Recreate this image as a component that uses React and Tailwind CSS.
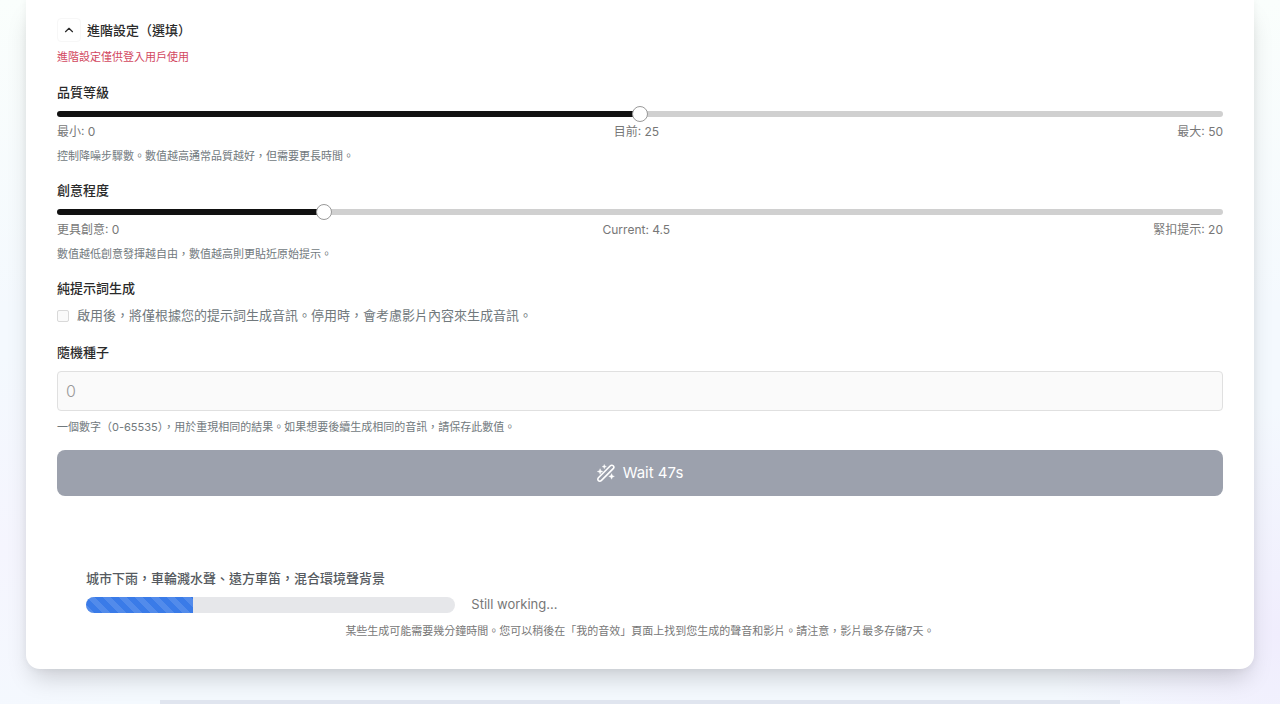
import React, { useState } from 'react';
import { ChevronUp } from 'lucide-react';

// Magic wand used on the generate button
const WandIcon = () => (
  <svg className="size-[18px]" viewBox="0 0 18 18" fill="none" stroke="currentColor" aria-hidden="true">
    <path
      d="M1.4 13.8 13.4 1.8a1.95 1.95 0 0 1 2.8 2.8L4.2 16.6a1.95 1.95 0 0 1-2.8-2.8Z"
      strokeWidth="1.6"
      strokeLinejoin="round"
    />
    <path
      d="m3.1 4.7.8 2 2 .8-2 .8-.8 2-.8-2-2-.8 2-.8ZM14.6 9.6l.8 2 2 .8-2 .8-.8 2-.8-2-2-.8 2-.8ZM7.3.5l.6 1.5 1.5.6-1.5.6-.6 1.5-.6-1.5-1.5-.6L6.700 2Z"
      fill="currentColor"
      strokeWidth="0.4"
      strokeLinejoin="round"
    />
  </svg>
);

// Labelled slider with min / current / max captions
const RangeField = ({ id, label, min, max, step, value, onChange, minText, currentText, maxText, hint }) => {
  const percent = ((value - min) / (max - min)) * 100;

  return (
    <div>
      <label htmlFor={id} className="block text-[13px] leading-[18px] font-medium text-[#2a2a2a]">
        {label}
      </label>
      <div className="mt-[3px] flex h-5 items-center">
        <input
          id={id}
          type="range"
          min={min}
          max={max}
          step={step}
          value={value}
          onChange={(e) => onChange(Number(e.target.value))}
          style={{ backgroundImage: `linear-gradient(to right, #111 ${percent}%, #d0d0d0 ${percent}%)` }}
          className="h-[6px] w-full appearance-none rounded-full [&::-webkit-slider-thumb]:size-4 [&::-webkit-slider-thumb]:appearance-none [&::-webkit-slider-thumb]:rounded-full [&::-webkit-slider-thumb]:border [&::-webkit-slider-thumb]:border-[#999] [&::-webkit-slider-thumb]:bg-white"
        />
      </div>
      <div className="flex justify-between text-xs leading-4 text-[#777]">
        <span>{minText}</span>
        <span>{currentText}</span>
        <span>{maxText}</span>
      </div>
      <p className="mt-2 text-[11px] leading-4 text-[#71797d]">{hint}</p>
    </div>
  );
};

const ProgressItem = ({ prompt, percent, status }) => (
  <div className="mt-[73px] px-[29px]">
    <p className="text-[13px] leading-[18px] font-medium text-[#555a60]">{prompt}</p>
    <div className="mt-2 flex h-5 items-center gap-4">
      <div
        role="progressbar"
        aria-label={prompt}
        aria-valuenow={percent}
        aria-valuemin={0}
        aria-valuemax={100}
        className="h-4 w-1/3 overflow-hidden rounded-full bg-[#e6e7ea]"
      >
        <div
          style={{ width: `${percent}%` }}
          className="h-full bg-[#3a7be8] bg-[linear-gradient(45deg,rgba(255,255,255,0.12)_25%,transparent_25%,transparent_50%,rgba(255,255,255,0.12)_50%,rgba(255,255,255,0.12)_75%,transparent_75%)] bg-size-[16px_16px]"
        />
      </div>
      <span className="text-[13px] text-[#777]">{status}</span>
    </div>
    <p className="mt-2 text-center text-[11px] leading-4 text-[#777]">
      某些生成可能需要幾分鐘時間。您可以稍後在「我的音效」頁面上找到您生成的聲音和影片。請注意，影片最多存儲7天。
    </p>
  </div>
);

const App = () => {
  const [open, setOpen] = useState(true);
  const [quality, setQuality] = useState(25);
  const [creativity, setCreativity] = useState(4.5);

  return (
    <div
      lang="zh-Hant"
      className="flex min-h-screen flex-col bg-[#f4f9fe] bg-[radial-gradient(circle_at_100%_90%,#f0edfd_0%,transparent_16%),radial-gradient(circle_at_0%_78%,#f5f5fe_0%,transparent_14%),linear-gradient(to_bottom,#fafefc_0%,transparent_45%)] font-['Inter','Noto_Sans_CJK_TC',sans-serif]"
    >
      <main className="mx-[26px] rounded-b-[14px] bg-white px-[31px] pt-[18px] pb-[30px] shadow-[0_0_8px_rgba(0,0,0,0.05),0_14px_24px_-6px_rgba(0,0,0,0.18)]">
        <div className="flex items-center gap-[6px]">
          <button
            type="button"
            aria-label="進階設定"
            aria-expanded={open}
            onClick={() => setOpen(!open)}
            className="flex size-6 items-center justify-center rounded-sm border border-[#f7f7f7] text-[#2a2a2a]"
          >
            <ChevronUp className={open ? 'size-[14px]' : 'size-[14px] rotate-180'} />
          </button>
          <h2 className="text-[13px] leading-[18px] font-medium text-[#2a2a2a]">進階設定（選填）</h2>
        </div>
        <p className="mt-[7px] text-[11px] leading-4 text-[#d2485f]">進階設定僅供登入用戶使用</p>

        {open && (
          <div className="mt-[18px] flex flex-col gap-[17px]">
            <RangeField
              id="quality"
              label="品質等級"
              min={0}
              max={50}
              step={1}
              value={quality}
              onChange={setQuality}
              minText="最小: 0"
              currentText={`目前: ${quality}`}
              maxText="最大: 50"
              hint="控制降噪步驟數。數值越高通常品質越好，但需要更長時間。"
            />
            <RangeField
              id="creativity"
              label="創意程度"
              min={0}
              max={20}
              step={0.5}
              value={creativity}
              onChange={setCreativity}
              minText="更具創意: 0"
              currentText={`Current: ${creativity}`}
              maxText="緊扣提示: 20"
              hint="數值越低創意發揮越自由，數值越高則更貼近原始提示。"
            />

            <div>
              <h3 className="text-[13px] leading-[18px] font-medium text-[#2a2a2a]">純提示詞生成</h3>
              <div className="mt-[9px] flex h-5 items-center gap-2">
                <input
                  id="prompt-only"
                  type="checkbox"
                  disabled
                  className="size-3 appearance-none rounded-xs border border-[#d9d9d9] bg-[#fafafa]"
                />
                <label htmlFor="prompt-only" className="text-[13px] text-[#71797d]">
                  啟用後，將僅根據您的提示詞生成音訊。停用時，會考慮影片內容來生成音訊。
                </label>
              </div>
            </div>

            <div>
              <label htmlFor="seed" className="block text-[13px] leading-[18px] font-medium text-[#2a2a2a]">
                隨機種子
              </label>
              <input
                id="seed"
                type="number"
                placeholder="0"
                disabled
                className="mt-[10px] block h-10 w-full rounded-sm border border-[#e0e0e0] bg-[#fafafa] px-2 text-base font-light placeholder:text-[#999]"
              />
              <p className="mt-2 text-[11px] leading-4 text-[#71797d]">
                一個數字（0-65535），用於重現相同的結果。如果想要後續生成相同的音訊，請保存此數值。
              </p>
            </div>
          </div>
        )}

        <button
          type="button"
          disabled
          className="mt-[15px] flex h-[46px] w-full items-center justify-center gap-2 rounded-lg bg-[#9ca1ad] text-[15px] text-white"
        >
          <WandIcon />
          Wait 47s
        </button>

        <ProgressItem prompt="城市下雨，車輪濺水聲、遠方車笛，混合環境聲背景" percent={29} status="Still working..." />
      </main>

      {/* Top edge of the next section */}
      <div className="mx-auto mt-[31px] min-h-1 w-3/4 flex-1 bg-[#e0e5ef]" />
    </div>
  );
};

export default App;
